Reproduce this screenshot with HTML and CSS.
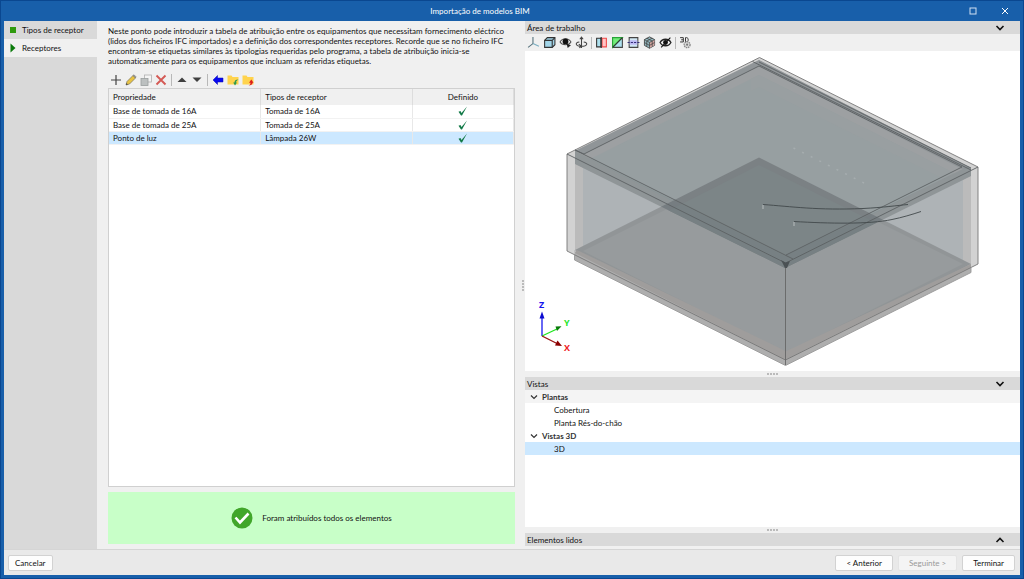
FILE: index.html
```html
<!DOCTYPE html>
<html lang="pt">
<head>
  <meta charset="UTF-8">
  <title>Importação de modelos BIM</title>
  <link rel="stylesheet" href="styles.css">
</head>
<body>

  <div class="window">
    <header class="titlebar">
      <h1>Importação de modelos BIM</h1>
      <div class="window-buttons">
        <button type="button" aria-label="Maximizar"><svg viewBox="0 0 8 8"><rect x="1" y="1" width="6" height="6" fill="none" stroke="#cfe0f2"/></svg></button>
        <button type="button" aria-label="Fechar"><svg viewBox="0 0 8 8"><path d="M1 1l6 6M7 1l-6 6" stroke="#fff" fill="none"/></svg></button>
      </div>
    </header>

    <div class="content">
      <nav class="steps">
        <button type="button" class="step">
          <svg viewBox="0 0 8 10"><rect x="1" y="2" width="6" height="6" fill="#2f9a0d"/></svg>
          Tipos de receptor
        </button>
        <button type="button" class="step current">
          <svg viewBox="0 0 8 10"><path d="M1.500 0.500v9l5-4.500z" fill="#0a7a0a"/></svg>
          Receptores
        </button>
      </nav>

      <main class="main">
        <p class="intro">Neste ponto pode introduzir a tabela de atribuição entre os equipamentos que necessitam fornecimento eléctrico (lidos dos ficheiros IFC importados) e a definição dos correspondentes receptores. Recorde que se no ficheiro IFC encontram-se etiquetas similares às tipologias requeridas pelo programa, a tabela de atribuição inicia-se automaticamente para os equipamentos que incluam as referidas etiquetas.</p>

        <div class="toolbar">
          <button type="button" aria-label="Adicionar"><svg viewBox="0 0 12 12"><path d="M6 1v10M1 6h10" stroke="#444" stroke-width="1.200"/></svg></button>
          <button type="button" aria-label="Editar"><svg viewBox="0 0 12 12"><path d="M1 11l1-3.500 6-6 2.500 2.500-6 6z" fill="#e9c342" stroke="#77715c" stroke-width=".7"/><path d="M8 1.500l1-.8 2.200 2.200-.8 1z" fill="#999" stroke="#666" stroke-width=".4"/><path d="M1 11l.5-2 1.500 1.500z" fill="#444"/></svg></button>
          <button type="button" aria-label="Copiar"><svg viewBox="0 0 12 12"><rect x="4.500" y="1" width="7" height="7" fill="#f4f4f4" stroke="#b0b0b0" stroke-width=".8"/><rect x="1" y="4.500" width="7" height="7" fill="#bcc0c0" stroke="#9a9e9e" stroke-width=".8"/></svg></button>
          <button type="button" aria-label="Eliminar"><svg viewBox="0 0 12 12"><path d="M1.500 1.500l9 9M10.500 1.500l-9 9" stroke="#d45a55" stroke-width="1.900"/></svg></button>
          <span class="separator"></span>
          <button type="button" aria-label="Subir"><svg viewBox="0 0 12 12"><path d="M1.500 8L6 3.500 10.500 8z" fill="#404040"/></svg></button>
          <button type="button" aria-label="Descer"><svg viewBox="0 0 12 12"><path d="M1.500 3.500h9L6 8z" fill="#404040"/></svg></button>
          <span class="separator"></span>
          <button type="button" aria-label="Atribuir"><svg viewBox="0 0 12 12"><path d="M1 6l4.500-4.500V4H11v4H5.500v2.500z" fill="#0808f0" stroke="#0808b0" stroke-width=".5"/></svg></button>
          <button type="button" aria-label="Importar"><svg viewBox="0 0 12 12"><path d="M.5 1.500h4l1 1.500h6v7.500H.5z" fill="#ffd34d"/><path d="M11.500 5.500c-3 0-4 1-4 3H6.200l1.800 3 2-3H9c0-1.200.8-1.800 2.500-3z" fill="#2e9a4d"/></svg></button>
          <button type="button" aria-label="Exportar"><svg viewBox="0 0 12 12"><path d="M.5 1.500h4l1 1.500h6v7.500H.5z" fill="#ffd34d"/><path d="M6.500 11.500c1.500-.5 2-1.300 2-2.700H7l2.300-3.300 2.200 3.300h-1c0 1.700-1.500 2.700-4 2.700z" fill="#dc1c1c"/></svg></button>
        </div>

        <div class="table-box">
          <table>
            <thead>
              <tr><th>Propriedade</th><th>Tipos de receptor</th><th class="defined">Definido</th></tr>
            </thead>
            <tbody>
              <tr>
                <td>Base de tomada de 16A</td><td>Tomada de 16A</td>
                <td class="defined"><svg viewBox="0 0 10 10"><path d="M.5 5.800L2.500 5l1 2L9 .5 4 9.500H3z" fill="#137a48"/></svg></td>
              </tr>
              <tr>
                <td>Base de tomada de 25A</td><td>Tomada de 25A</td>
                <td class="defined"><svg viewBox="0 0 10 10"><path d="M.5 5.800L2.500 5l1 2L9 .5 4 9.500H3z" fill="#137a48"/></svg></td>
              </tr>
              <tr class="selected">
                <td>Ponto de luz</td><td>Lâmpada 26W</td>
                <td class="defined"><svg viewBox="0 0 10 10"><path d="M.5 5.800L2.500 5l1 2L9 .5 4 9.500H3z" fill="#137a48"/></svg></td>
              </tr>
            </tbody>
          </table>
        </div>

        <div class="status">
          <svg viewBox="0 0 22 22"><circle cx="11" cy="11" r="10.500" fill="#41a62a"/><path d="M4.500 10.500l4.500 5L17.500 6.500" fill="none" stroke="#fff" stroke-width="2.600"/></svg>
          <span>Foram atribuídos todos os elementos</span>
        </div>
      </main>

      <div class="splitter vertical"><i></i><i></i><i></i><i></i></div>

      <aside class="side">
        <div class="panel-header">
          <h2>Área de trabalho</h2>
          <button type="button" aria-label="Recolher"><svg viewBox="0 0 10 8"><path d="M1.500 2L5 5.500 8.500 2" fill="none" stroke="#111" stroke-width="1.600"/></svg></button>
        </div>
        <div class="toolbar view-tools">
          <button type="button" aria-label="Eixos"><svg viewBox="0 0 12 12"><path d="M5.500 1v6L1 10.500" fill="none" stroke="#56727c"/><path d="M5.500 7l5.500 2.500" stroke="#79adc0"/></svg></button>
          <button type="button" aria-label="Vista 3D"><svg viewBox="0 0 12 12"><path d="M1.500 4l2.500-2.500h7V8l-2.500 2.500h-7z" fill="#a3d5e8" stroke="#333"/><path d="M1.500 4h7v6.500M8.500 4L11 1.500" fill="none" stroke="#333"/></svg></button>
          <button type="button" aria-label="Orbitar"><svg viewBox="0 0 12 12"><path d="M1 5.500C3 1.500 9 1.500 11 5.500c-1 2-3 2.500-5 2.500S2 7.500 1 5.500z" fill="#fff" stroke="#555"/><circle cx="6" cy="5" r="2.700" fill="#111"/><path d="M7 7l4 1.500-3 2.500z" fill="#222"/></svg></button>
          <button type="button" aria-label="Rodar"><svg viewBox="0 0 12 12"><path d="M6 1v10M4.500 3L6 1l1.500 2M4 5.500C-.5 6 .5 9.500 6 9.500s6.500-3.500 2-4M3.500 7.500L6 9.500l-2 1.500" fill="none" stroke="#444"/></svg></button>
          <span class="separator"></span>
          <button type="button" aria-label="Corte"><svg viewBox="0 0 12 12"><path d="M1.500 2h4v8h-4z" fill="#aee0ee" stroke="#333"/><path d="M6.500 2h4v8h-4z" fill="#ffc5c5" stroke="#ef4a4a"/><path d="M5.700 1v10" stroke="#222"/></svg></button>
          <button type="button" aria-label="Secção"><svg viewBox="0 0 12 12"><path d="M1.500 1.500h9v9h-9z" fill="#aee0ee" stroke="#444"/><path d="M1.500 1.500h9l-9 9z" fill="#72ed79" stroke="#27a538"/><path d="M10.500 1.500l-9 9" stroke="#333"/></svg></button>
          <button type="button" aria-label="Plano"><svg viewBox="0 0 12 12"><path d="M2 1.500h8v9H2z" fill="#d1e7f4" stroke="#444"/><path d="M2.500 4h7v4h-7z" fill="#bcb8f4"/><path d="M.5 6h11" stroke="#332e77" stroke-dasharray="2 1"/></svg></button>
          <button type="button" aria-label="Camadas"><svg viewBox="0 0 12 12"><path d="M6 .8l4.700 2.500v5.400L6 11.300 1.300 8.700V3.300z" fill="#91b6bd" stroke="#444" stroke-width=".8"/><path d="M6 6v5l4.500-2.500v-5z" fill="#d8a8a3"/><path d="M1.300 3.300L6 6l4.700-2.700M6 6v5.300M3.500 2L8.500 4.700v5M8.500 2L3.500 4.700v5M1.300 6L6 8.700 10.700 6" fill="none" stroke="#444" stroke-width=".7"/></svg></button>
          <button type="button" aria-label="Ocultar"><svg viewBox="0 0 12 12"><path d="M1 6C3 2 9 2 11 6 9 10 3 10 1 6z" fill="#eee" stroke="#222" stroke-width="1.200"/><circle cx="6" cy="6" r="2.200" fill="#111"/><path d="M2 10.500l8.500-9" stroke="#111"/></svg></button>
          <span class="separator"></span>
          <button type="button" aria-label="Opções 3D"><svg viewBox="0 0 12 12"><path d="M1 1.500h3v4H1M2 3.500h2M6 1.500v4h1c2 0 2-4 0-4z" fill="none" stroke="#333" stroke-width=".9"/><circle cx="7.500" cy="8" r="2.700" fill="#ddd" stroke="#888" stroke-width="1.300" stroke-dasharray="1.400 .6"/><circle cx="7.500" cy="8" r="1" fill="#777"/></svg></button>
        </div>

        <div class="canvas">
          <svg viewBox="525 51 495 320" role="img" aria-label="Modelo 3D">
            <defs>
              <clipPath id="roofClip"><path d="M575 151L759 60l212 108v8l-186 92-210-104z"/></clipPath>
            </defs>
            <!-- outer walls and slab -->
            <path d="M567 154L759.500 57.500 978 167v97l-192.500 96L567 251z" fill="#d2d2d2"/>
            <path d="M574.500 250L785 350l186-86v8.500L785.500 365.500 574.500 260z" fill="#aeaeae"/>
            <path d="M575 151L759 60l212 108v98l-185 93-211-107z" fill="#bbb"/>
            <path d="M583 155L759 68l204 100v94l-204-95-176 86z" fill="#aeb3b6"/>
            <!-- floor -->
            <path d="M575 250l184-92.500L971 264l-185.500 95.500z" fill="#919597"/>
            <path d="M583 251l176-88 204 101-177.500 89z" fill="#979b9d"/>
            <path d="M577 250l208.500 101v9L575 253zM971 264l-185.500 87.500v8L971 267z" fill="#9f9d9c"/>
            <!-- roof -->
            <g clip-path="url(#roofClip)">
              <path d="M567 50h411v230H567z" fill="#9da0a2"/>
              <path d="M590 159l169-84 195 98-169 86z" fill="#979fa1"/>
              <path d="M751 79l8-4 195 98-10 6-185-92-8 4z" fill="#999fa1"/>
              <path d="M575 250l184-92.500L971 264l-185.500 95.500z" fill="#7b8184"/>
              <path d="M583 254l176-89 204 101-177.500 89z" fill="#7c8587"/>
              <path d="M575 151l210 105 186-91v20l-186 90-210-105z" fill="#687278" opacity=".25"/>
              <path d="M575 151L759 60l212 108-9 1-203-103-175 88z" fill="#858d90" opacity=".55"/>
            </g>
            <g fill="none" stroke="#5c6163" stroke-width=".9">
              <path d="M567 251v-97L759.500 57.500 978 167v97L785.500 360z" stroke="#777"/>
              <path d="M567 154l218.500 109L978 167M575 150l218 109M584 154l175-88 203 101-176 88M752.500 61.500L971 170M759 62l212 106M575 150l9 4"/>
              <path d="M785.500 263v102" stroke="#666"/>
              <path d="M574.500 255v5l211 105.500L971 272.500V268" stroke="#999"/>
            </g>
            <path d="M781 260l4.500 2.500 4.500-1.500-3 7h-2z" fill="#4b5154"/>
            <g fill="none" stroke="#42484b" stroke-width=".9">
              <path d="M763 204.500c28 2 55 6 100 4 20-1 34-3 45-4M794 221.500c35 2 75 3 98-2 10-2 20-5 29-8"/>
              <path d="M763 205v4M794 222v4" stroke="#c0c4c5"/>
            </g>
            <path d="M793.500 148l70.500 35" stroke="#a6adaf" stroke-width="1.500" stroke-dasharray="2 7.600"/>
            <!-- axes -->
            <path d="M542 336v-18" stroke="#1616ee" stroke-width="1.300"/><path d="M539.500 318.500l2.500-7 2.500 7z" fill="#0b0bd0"/>
            <path d="M542 336l16-7.500" stroke="#1ee51e" stroke-width="1.300"/><path d="M555.500 326.500l6-.3-4.500 4.800z" fill="#087a08"/>
            <path d="M542 336l15 7.500" stroke="#991010" stroke-width="1.300"/><path d="M557.500 340.500l4.500 5.500-7-.5z" fill="#8b0000"/>
            <g class="axis-names">
              <text x="539" y="308" fill="#1616ee">Z</text>
              <text x="564" y="326" fill="#1ee51e">Y</text>
              <text x="564" y="351" fill="#ee2222">X</text>
            </g>
          </svg>
        </div>

        <div class="splitter"><i></i><i></i><i></i><i></i></div>

        <div class="panel-header">
          <h2>Vistas</h2>
          <button type="button" aria-label="Recolher"><svg viewBox="0 0 10 8"><path d="M1.500 2L5 5.500 8.500 2" fill="none" stroke="#111" stroke-width="1.600"/></svg></button>
        </div>
        <ul class="tree">
          <li class="group shaded"><svg viewBox="0 0 8 8"><path d="M1 2.500l3 3 3-3" fill="none" stroke="#333" stroke-width="1.200"/></svg>Plantas</li>
          <li>Cobertura</li>
          <li>Planta Rés-do-chão</li>
          <li class="group"><svg viewBox="0 0 8 8"><path d="M1 2.500l3 3 3-3" fill="none" stroke="#333" stroke-width="1.200"/></svg>Vistas 3D</li>
          <li class="selected">3D</li>
        </ul>

        <div class="splitter"><i></i><i></i><i></i><i></i></div>

        <div class="panel-header last">
          <h2>Elementos lidos</h2>
          <button type="button" aria-label="Expandir"><svg viewBox="0 0 10 8"><path d="M1.500 6L5 2.500 8.500 6" fill="none" stroke="#111" stroke-width="1.600"/></svg></button>
        </div>
      </aside>
    </div>

    <footer class="footer">
      <button type="button" class="btn cancel">Cancelar</button>
      <button type="button" class="btn">&lt; Anterior</button>
      <button type="button" class="btn" disabled>Seguinte &gt;</button>
      <button type="button" class="btn">Terminar</button>
    </footer>
  </div>

</body>
</html>
```
FILE: styles.css
```css
* {
  box-sizing: border-box;
}

body {
  margin: 0;
  font-family: "Lato", "Liberation Sans", sans-serif;
  font-size: 8px;
  line-height: 10px;
  font-variant-ligatures: none;
  color: #111;
}

button {
  margin: 0;
  padding: 0;
  border: none;
  background: none;
  font: inherit;
  color: inherit;
}

svg {
  display: block;
}

h1, h2 {
  margin: 0;
  font-size: 8px;
  font-weight: normal;
}

.window {
  display: flex;
  flex-direction: column;
  height: 100vh;
  padding: 0 3px 3px;
  background: #185faa;
  border: 1px solid #0a4790;
}

.titlebar {
  display: flex;
  align-items: center;
  height: 20px;
  color: #fff;
}

.titlebar h1 {
  flex: 1;
  text-align: center;
}

.window-buttons {
  display: flex;
  justify-content: flex-end;
  gap: 24px;
  width: 64px;
  padding-right: 11px;
}

.window-buttons svg {
  width: 8px;
  height: 8px;
}

.content {
  display: flex;
  flex: 1;
  min-height: 0;
  background: #f0f0f0;
}

.steps {
  width: 93px;
  background: #d9d9d9;
}

.step {
  display: flex;
  align-items: center;
  gap: 5px;
  width: 100%;
  height: 18px;
  padding-left: 5px;
}

.step svg {
  width: 8px;
  height: 10px;
}

.step.current {
  background: #f0f0f0;
}

.main {
  display: flex;
  flex-direction: column;
  flex: 407;
  min-width: 0;
  padding: 5px 0 5px 11px;
}

.intro {
  margin: 0;
}

.toolbar {
  display: flex;
  align-items: center;
  gap: 3px;
  height: 16px;
  margin: 6px 0 0 2px;
}

.toolbar svg {
  width: 12px;
  height: 12px;
}

.separator {
  width: 1px;
  height: 12px;
  margin: 0 1px;
  background: #b8b8b8;
}

.table-box {
  flex: 1;
  background: #fff;
  border: 1px solid #d0d0d0;
}

table {
  width: 100%;
  border-collapse: collapse;
  table-layout: fixed;
}

th, td {
  height: 13px;
  padding: 0 4px;
  text-align: left;
  font-weight: normal;
  border-right: 1px solid #e8e8e8;
}

th {
  height: 16px;
  background: #f0f0f0;
  border-color: #ddd;
}

td {
  border-bottom: 1px solid #f2f2f2;
}

.defined {
  width: 25%;
  text-align: center;
}

.defined svg {
  width: 10px;
  height: 10px;
  margin: 0 auto;
}

.selected {
  background: #cce8ff;
}

.status {
  display: flex;
  align-items: center;
  justify-content: center;
  gap: 9px;
  height: 52px;
  margin-top: 5px;
  background: #c8ffc8;
}

.status svg {
  width: 22px;
  height: 22px;
}

.splitter {
  display: flex;
  align-items: center;
  justify-content: center;
  gap: 1px;
  height: 6px;
}

.splitter i {
  width: 2px;
  height: 2px;
  background: #bbb;
}

.splitter.vertical {
  flex-direction: column;
  width: 10px;
  height: auto;
  padding-left: 5px;
}

.side {
  display: flex;
  flex-direction: column;
  flex: 495;
  min-width: 0;
}

.panel-header {
  display: flex;
  align-items: center;
  justify-content: space-between;
  height: 13px;
  padding: 0 15px 0 2px;
  background: #d9d9d9;
}

.panel-header svg {
  width: 10px;
  height: 8px;
}

.panel-header.last {
  margin-bottom: 3px;
}

.view-tools {
  height: 17px;
  margin: 0 0 0 2px;
}

.view-tools svg {
  width: 13px;
  height: 13px;
}

.view-tools .separator {
  margin: 0;
}

.canvas {
  flex: 320;
  min-height: 0;
  background: #fff;
}

.canvas svg {
  width: 100%;
  height: 100%;
}

.axis-names {
  font-family: "Open Sans", sans-serif;
  font-size: 9px;
  font-weight: bold;
}

.tree {
  flex: 137;
  margin: 0;
  padding: 0;
  list-style: none;
  background: #fff;
}

.tree li {
  display: flex;
  align-items: center;
  height: 13px;
  padding-left: 29px;
}

.tree .group {
  gap: 4px;
  padding-left: 5px;
  font-weight: bold;
  color: #333;
}

.tree .shaded {
  background: #f4f4f4;
}

.tree .selected {
  background: #cce8ff;
}

.tree svg {
  width: 8px;
  height: 8px;
}

.footer {
  display: flex;
  align-items: center;
  gap: 5px;
  height: 26px;
  padding: 0 5px 0 4px;
  background: #e9e9e9;
  border-top: 1px solid #d5d5d5;
}

.btn {
  height: 16px;
  padding: 0 10px;
  background: #fdfdfd;
  border: 1px solid #d2d2d2;
  border-radius: 2px;
}

.btn:disabled {
  color: #999;
  background: #f4f4f4;
  border-color: #e4e4e4;
}

.cancel {
  padding: 0 6px;
  margin-right: auto;
}
```
